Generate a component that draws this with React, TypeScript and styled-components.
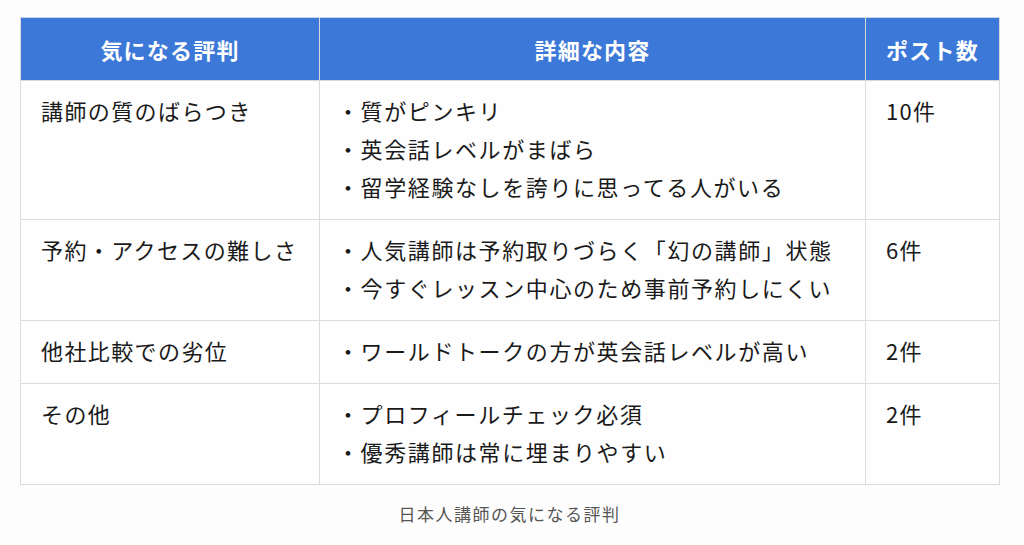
import React from 'react'
import styled, { createGlobalStyle } from 'styled-components'

const GlobalStyle = createGlobalStyle`
  body {
    margin: 0;
    background: #fdfdfd;
    font-family: "Noto Sans CJK JP", "Noto Sans", sans-serif;
    color: #1a1a1a;
  }
`

const Figure = styled.figure`
  margin: 0;
  padding: 17px 25px 0 20px;
`

const Table = styled.table`
  width: 979px;
  table-layout: fixed;
  border-collapse: collapse;
  background: #fefefe;
  font-size: 22px;
`

const HeadCell = styled.th<{ $width: number }>`
  width: ${({ $width }) => $width}px;
  height: 63px;
  padding: 0 12px;
  box-sizing: border-box;
  background: #3b78d8;
  color: #fff;
  font-weight: 700;
  font-size: 22px;
  letter-spacing: 1.2px;
  text-align: center;
  border: 1px solid #d8d8d8;
  border-top-color: #c9d7ee;
  border-left-color: #e6eefa;
  line-height: 1;
  &:first-child {
    border-left-color: #d8d8d8;
  }
`

const Cell = styled.td<{ $spacing: number }>`
  vertical-align: top;
  padding: 10px 20px 14px;
  line-height: 38px;
  letter-spacing: ${({ $spacing }) => $spacing}px;
  white-space: nowrap;
  border: 1px solid #dcdcdc;
  color: #1a1a1a;
`

const Bullet = styled.div`
  margin-left: -3px;
`

const Caption = styled.figcaption`
  margin-top: 16px;
  text-align: center;
  font-size: 17px;
  letter-spacing: 1.5px;
  color: #555;
`

const rows = [
  {
    topic: '講師の質のばらつき',
    details: ['質がピンキリ', '英会話レベルがまばら', '留学経験なしを誇りに思ってる人がいる'],
    count: '10件',
  },
  {
    topic: '予約・アクセスの難しさ',
    details: ['人気講師は予約取りづらく「幻の講師」状態', '今すぐレッスン中心のため事前予約しにくい'],
    count: '6件',
  },
  {
    topic: '他社比較での劣位',
    details: ['ワールドトークの方が英会話レベルが高い'],
    count: '2件',
  },
  {
    topic: 'その他',
    details: ['プロフィールチェック必須', '優秀講師は常に埋まりやすい'],
    count: '2件',
  },
]

export default function App() {
  return (
    <>
      <GlobalStyle />
      <Figure>
        <Table>
          <thead>
            <tr>
              <HeadCell $width={299}>気になる評判</HeadCell>
              <HeadCell $width={546}>詳細な内容</HeadCell>
              <HeadCell $width={134}>ポスト数</HeadCell>
            </tr>
          </thead>
          <tbody>
            {rows.map((row) => (
              <tr key={row.topic}>
                <Cell $spacing={1.4}>{row.topic}</Cell>
                <Cell $spacing={1.6}>
                  {row.details.map((d) => (
                    <Bullet key={d}>・{d}</Bullet>
                  ))}
                </Cell>
                <Cell $spacing={1.3}>{row.count}</Cell>
              </tr>
            ))}
          </tbody>
        </Table>
        <Caption>日本人講師の気になる評判</Caption>
      </Figure>
    </>
  )
}
